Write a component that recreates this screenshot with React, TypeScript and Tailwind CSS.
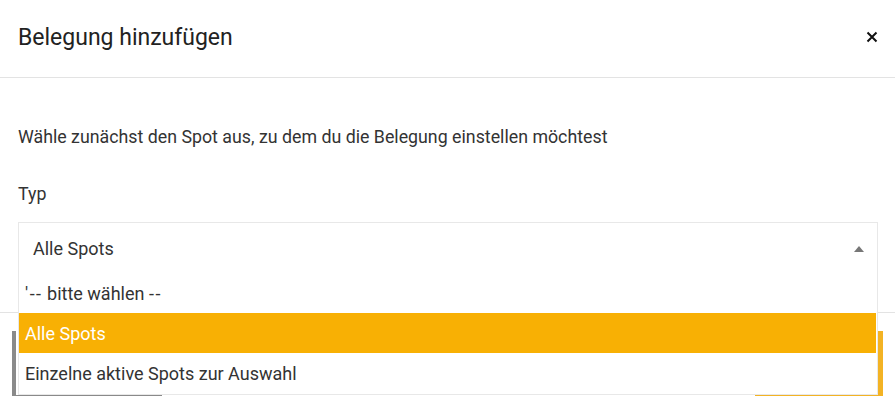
import React from "react";

export default function App() {
  const font = { fontFamily: 'Roboto, "Noto Sans", sans-serif' };
  return (
    <div
      className="w-[895px] h-[406px] bg-white overflow-hidden relative text-[#333] [font-variant-ligatures:none]"
      style={font}
    >
      <div className="h-[78px] border-b border-[#e3e3e3] flex items-center justify-between pl-[18px] pr-[17px]">
        <h1 className="text-[23px] text-[#222] leading-none -mt-[3px]">Belegung hinzufügen</h1>
        <svg width="12" height="12" viewBox="0 0 12 12" className="-mt-[4px]">
          <path d="M1.5 1.5 L10.5 10.5 M10.5 1.5 L1.5 10.5" stroke="#111" strokeWidth="2" />
        </svg>
      </div>
      <div className="px-[18px] pt-[47px] h-[234px] relative">
        <p className="text-[17.8px] leading-[24px]">Wähle zunächst den Spot aus, zu dem du die Belegung einstellen möchtest</p>
        <p className="text-[17.8px] leading-[24px] mt-[33px]">Typ</p>
        <div className="absolute left-[18px] right-[17px] top-[144px] z-10 bg-white border border-[#e8e8e8] text-[18px]">
          <div className="h-[50px] flex items-center justify-between pl-[14px] pr-[13px]">
            <span>Alle Spots</span>
            <svg width="10" height="6" viewBox="0 0 10 6" className="mt-[2px]">
              <path d="M0 6 L5 0 L10 6 Z" fill="#777" />
            </svg>
          </div>
          <div className="h-[40px] flex items-center px-[6px] whitespace-pre">
            <span className="tracking-[1.5px]">'--</span> bitte wählen <span className="tracking-[1.5px]">--</span>
          </div>
          <div className="h-[40px] flex items-center px-[6px] bg-[#f8b004] text-white mr-[1px]">Alle Spots</div>
          <div className="h-[41px] flex items-center px-[6px]">Einzelne aktive Spots zur Auswahl</div>
        </div>
      </div>
      <div className="border-t border-[#e3e3e3] px-[12px] pt-[18px] flex justify-between">
        <div className="w-[150px] h-[65px] bg-white border-l-4 border-b border-[#8a8a8a]" />
        <div className="w-[128px] h-[65px] bg-white border-r-[5px] border-b-2 border-[#f3b324]" />
      </div>
    </div>
  );
}
